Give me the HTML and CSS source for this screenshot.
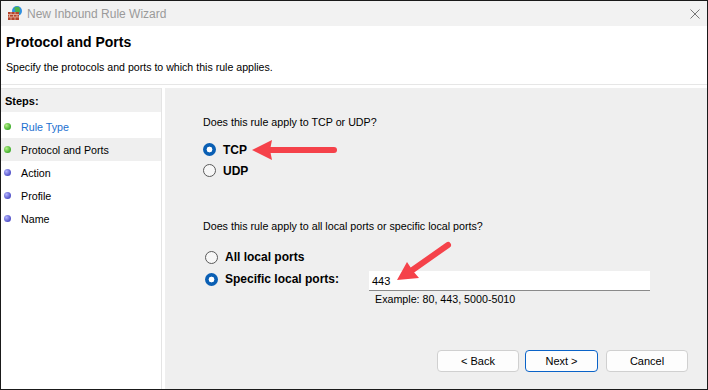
FILE: index.html
```html
<!DOCTYPE html>
<html>
<head>
<meta charset="utf-8">
<link rel="stylesheet" href="styles.css">
</head>
<body>
<div class="window">
  <div class="titlebar">
    <svg class="app-icon" width="16" height="16" viewBox="0 0 16 16">
      <circle cx="10" cy="6" r="5" fill="#2e8fe0"/>
      <path d="M7 3 Q9 5 8 7 Q11 6 12 9 Q14 5 12 2 Q9 1 7 3Z" fill="#4cb34a"/>
      <rect x="1" y="7" width="11" height="8" fill="#b5442c"/>
      <path d="M1 9.5H12M1 12H12M4 7V9.5M8 7V9.5M2.5 9.5V12M6.5 9.5V12M10 9.5V12M4 12V15M8 12V15" stroke="#e9b9a4" stroke-width="0.8"/>
    </svg>
    <span class="title-text">New Inbound Rule Wizard</span>
    <svg class="close" width="10" height="10" viewBox="0 0 10 10">
      <path d="M0.5 0.5L9.5 9.5M9.5 0.5L0.5 9.5" stroke="#777" stroke-width="1"/>
    </svg>
  </div>
  <div class="header">
    <div class="h-title">Protocol and Ports</div>
    <div class="h-sub">Specify the protocols and ports to which this rule applies.</div>
  </div>
  <div class="sep"></div>
  <div class="body">
    <div class="steps">
      <div class="steps-head">Steps:</div>
      <div class="step link"><span class="dot green"></span>Rule Type</div>
      <div class="step current"><span class="dot green"></span>Protocol and Ports</div>
      <div class="step"><span class="dot purple"></span>Action</div>
      <div class="step"><span class="dot purple"></span>Profile</div>
      <div class="step"><span class="dot purple"></span>Name</div>
    </div>
    <div class="content">
      <div class="q q1">Does this rule apply to TCP or UDP?</div>
      <div class="radios r1">
        <div class="radio-row"><span class="radio on"></span><span class="lbl">TCP</span></div>
        <div class="radio-row"><span class="radio"></span><span class="lbl">UDP</span></div>
      </div>
      <div class="q q2">Does this rule apply to all local ports or specific local ports?</div>
      <div class="radios r2">
        <div class="radio-row"><span class="radio"></span><span class="lbl">All local ports</span></div>
        <div class="radio-row"><span class="radio on"></span><span class="lbl lbl-wide">Specific local ports:</span>
          <div class="port-box">
            <div class="input">443</div>
            <div class="example">Example: 80, 443, 5000-5010</div>
          </div>
        </div>
      </div>
      <div class="buttons">
        <div class="btn">&lt; Back</div>
        <div class="btn primary">Next &gt;</div>
        <div class="btn cancel">Cancel</div>
      </div>
      <svg class="arrow arrow1" width="90" height="24" viewBox="0 0 90 24">
        <line x1="20" y1="12" x2="84" y2="12" stroke="#f5424a" stroke-width="6" stroke-linecap="round"/>
        <polygon points="2,12 22,2 20,12 22,22" fill="#f5424a"/>
      </svg>
      <svg class="arrow arrow2" width="60" height="46" viewBox="0 0 60 46">
        <line x1="16" y1="33" x2="53" y2="7" stroke="#f5424a" stroke-width="6" stroke-linecap="round"/>
        <polygon points="2,42 12,24 18,33 24,40" fill="#f5424a"/>
      </svg>
    </div>
  </div>
</div>
</body>
</html>
```
FILE: styles.css
```css
html, body {
  margin: 0;
  padding: 0;
}
body {
  width: 708px;
  height: 390px;
  font-family: "Liberation Sans", Arial, sans-serif;
  font-size: 10.7px;
  color: #000;
  overflow: hidden;
}
.window {
  box-sizing: border-box;
  width: 708px;
  height: 390px;
  border: 1px solid #1a1a1a;
  display: flex;
  flex-direction: column;
  background: #fff;
}
.titlebar {
  height: 25px;
  flex: none;
  background: #f2f2f2;
  display: flex;
  align-items: center;
  padding: 0 7px 0 6px;
}
.app-icon {
  flex: none;
  margin-right: 4px;
  margin-top: -2px;
}
.title-text {
  color: #9a9a9a;
  font-size: 12px;
  flex: 1;
}
.close {
  flex: none;
}
.header {
  height: 58px;
  flex: none;
  padding-left: 5px;
  background: #fff;
}
.h-title {
  font-weight: bold;
  font-size: 14px;
  margin-top: 8px;
  height: 18px;
}
.h-sub {
  margin-top: 9px;
  font-size: 10.6px;
}
.sep {
  height: 1px;
  background: #e6e6e6;
  flex: none;
  margin-bottom: 3px;
}
.body {
  flex: 1;
  display: flex;
  gap: 3px;
  background: #fff;
}
.steps {
  width: 160px;
  flex: none;
  border-right: 1px solid #e4e4e4;
  border-top: 1px solid #e8e8e8;
  background: #fff;
}
.steps-head {
  background: #f0f0f0;
  font-weight: bold;
  font-size: 11px;
  height: 23px;
  line-height: 24px;
  padding-left: 4px;
  margin-bottom: 3px;
}
.step {
  height: 23px;
  display: flex;
  align-items: center;
  padding-left: 3px;
}
.step.current {
  background: #efefef;
}
.step.link {
  color: #1c6fd0;
}
.dot {
  width: 7px;
  height: 7px;
  border-radius: 50%;
  margin-right: 10px;
  flex: none;
}
.dot.green {
  background: radial-gradient(circle at 35% 35%, #b6f08a, #3fae2a 70%);
}
.dot.purple {
  background: radial-gradient(circle at 35% 35%, #b4b4ff, #5252c8 70%);
}
.content {
  flex: 1;
  background: #efefef;
  position: relative;
  padding: 27px 0 17px 38px;
  display: flex;
  flex-direction: column;
  align-items: flex-start;
}
.q {
  height: 15px;
  line-height: 15px;
}
.radios {
  display: flex;
  flex-direction: column;
}
.r1 {
  margin-top: 9px;
}
.radio-row {
  height: 21px;
  display: flex;
  align-items: center;
}
.r2 .radio-row {
  height: 22px;
}
.radio {
  box-sizing: border-box;
  width: 13px;
  height: 13px;
  border-radius: 50%;
  border: 1px solid #5a5a5a;
  background: #f7f7f7;
  margin-right: 7px;
  flex: none;
}
.radio.on {
  border: none;
  background: radial-gradient(circle, #fff 0, #fff 2.6px, #0a5fb4 3.2px);
}
.lbl {
  font-weight: bold;
  font-size: 12px;
}
.lbl-wide {
  width: 144px;
}
.q2 {
  margin-top: 38px;
}
.r2 {
  margin-top: 12px;
  margin-left: 2px;
}
.port-box {
  display: flex;
  flex-direction: column;
  margin-top: 19px;
}
.input {
  box-sizing: border-box;
  width: 281px;
  height: 20px;
  background: #fff;
  border-bottom: 1px solid #8a8a8a;
  line-height: 20px;
  padding-left: 3px;
  font-size: 11px;
}
.example {
  padding-left: 6px;
  height: 16px;
  line-height: 16px;
}
.buttons {
  display: flex;
  gap: 6px;
  margin-top: auto;
  margin-left: 234px;
}
.btn {
  box-sizing: border-box;
  width: 82px;
  height: 22px;
  border: 1px solid #d0d0d0;
  border-radius: 4px;
  background: #fdfdfd;
  text-align: center;
  line-height: 20px;
  font-size: 11px;
}
.btn.primary {
  width: 73px;
  border-color: #0a63c8;
}
.btn.cancel {
  margin-left: 2px;
}
.arrow {
  position: absolute;
}
.arrow1 {
  left: 85px;
  top: 50px;
}
.arrow2 {
  left: 230px;
  top: 150px;
}
```
